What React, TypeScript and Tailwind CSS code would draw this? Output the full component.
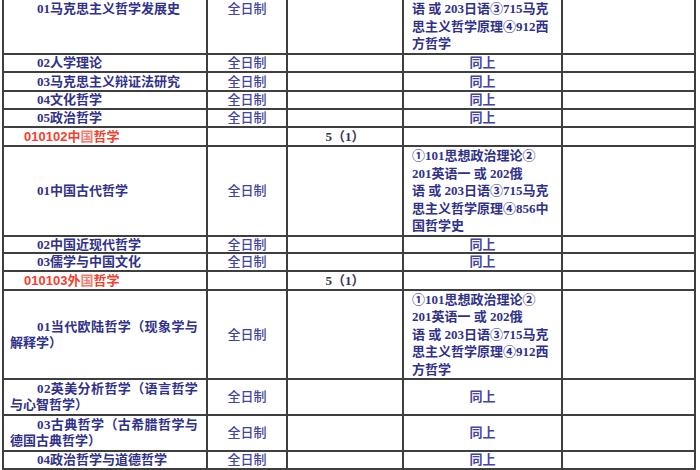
import React from "react";

const serif = { fontFamily: "'Liberation Serif', 'Noto Sans CJK SC', serif" } as const;

type Row = {
  c1: React.ReactNode;
  c1Kind: "single" | "wrap" | "red";
  c2?: string;
  c3?: string;
  c4?: React.ReactNode;
  c4Kind?: "lines" | "same";
};

const lines1 = [
  "①101思想政治理论②",
  "201英语一 或 202俄",
  "语 或 203日语③715马克",
  "思主义哲学原理④912西",
  "方哲学",
];
const lines2 = [
  "①101思想政治理论②",
  "201英语一 或 202俄",
  "语 或 203日语③715马克",
  "思主义哲学原理④856中",
  "国哲学史",
];

const rows: Row[] = [
  { c1: "01马克思主义哲学发展史", c1Kind: "single", c2: "全日制", c4: lines1, c4Kind: "lines" },
  { c1: "02人学理论", c1Kind: "single", c2: "全日制", c4: "同上", c4Kind: "same" },
  { c1: "03马克思主义辩证法研究", c1Kind: "single", c2: "全日制", c4: "同上", c4Kind: "same" },
  { c1: "04文化哲学", c1Kind: "single", c2: "全日制", c4: "同上", c4Kind: "same" },
  { c1: "05政治哲学", c1Kind: "single", c2: "全日制", c4: "同上", c4Kind: "same" },
  { c1: "中国哲学", c1Kind: "red", c3: "5（1）" },
  { c1: "01中国古代哲学", c1Kind: "single", c2: "全日制", c4: lines2, c4Kind: "lines" },
  { c1: "02中国近现代哲学", c1Kind: "single", c2: "全日制", c4: "同上", c4Kind: "same" },
  { c1: "03儒学与中国文化", c1Kind: "single", c2: "全日制", c4: "同上", c4Kind: "same" },
  { c1: "外国哲学", c1Kind: "red", c3: "5（1）" },
  { c1: ["01当代欧陆哲学（现象学与", "解释学）"], c1Kind: "wrap", c2: "全日制", c4: lines1, c4Kind: "lines" },
  { c1: ["02英美分析哲学（语言哲学", "与心智哲学）"], c1Kind: "wrap", c2: "全日制", c4: "同上", c4Kind: "same" },
  { c1: ["03古典哲学（古希腊哲学与", "德国古典哲学）"], c1Kind: "wrap", c2: "全日制", c4: "同上", c4Kind: "same" },
  { c1: "04政治哲学与道德哲学", c1Kind: "single", c2: "全日制", c4: "同上", c4Kind: "same" },
];

const redCodes = ["010102", "010103"];

export default function App() {
  let redIdx = 0;
  return (
    <div className="w-[700px] h-[470px] overflow-hidden bg-white">
      <div
        className="ml-[2px] mt-[-37px] w-[694px] grid grid-cols-[202px_78px_114px_157px_131px] grid-rows-[88px_16px_17px_16px_16px_17px_88px_15px_16px_17px_87px_34px_34px_16px] gap-[2px] p-[2px] bg-[#3f3f3f] text-[13px]"
        style={serif}
      >
        {rows.map((r, i) => {
          let c1: React.ReactNode;
          if (r.c1Kind === "red") {
            const code = redCodes[redIdx++];
            c1 = (
              <div
                className="bg-white flex items-center pl-[20px] text-[13px] leading-[16px] text-[#f2412f] font-semibold"
                style={{ fontFamily: "'Liberation Sans', 'Noto Sans CJK SC', sans-serif" }}
              >
                <span>{code}</span>
                <span>{(r.c1 as string).slice(0, 1)}</span>
                <span className="text-[#f57a72]">{(r.c1 as string).slice(1, 2)}</span>
                <span>{(r.c1 as string).slice(2)}</span>
              </div>
            );
          } else if (r.c1Kind === "wrap") {
            const [a, b] = r.c1 as string[];
            c1 = (
              <div className="bg-white flex items-center pl-[6px] text-[#30318a] font-bold">
                <div className="leading-[16px]">
                  <div className="pl-[27px] tracking-[0.4px] whitespace-nowrap">{a}</div>
                  <div className="whitespace-nowrap">{b}</div>
                </div>
              </div>
            );
          } else {
            c1 = (
              <div className="bg-white flex items-center pl-[33px] leading-[16px] text-[#30318a] font-bold whitespace-nowrap">
                {r.c1}
              </div>
            );
          }
          return (
            <React.Fragment key={i}>
              {c1}
              <div className="bg-white flex items-center justify-center leading-[16px] text-[#4444a2] font-medium">
                {r.c2 ?? ""}
              </div>
              <div className="bg-white flex items-center justify-center leading-[16px] text-[#34344f] font-bold">
                {r.c3 ?? ""}
              </div>
              {r.c4Kind === "lines" ? (
                <div className="bg-white flex flex-col justify-center pl-[8px] leading-[17.6px] text-[#30318a] font-bold whitespace-nowrap">
                  {(r.c4 as string[]).map((l, j) => (
                    <div key={j}>{l}</div>
                  ))}
                </div>
              ) : (
                <div className="bg-white flex items-center justify-center leading-[16px] text-[#4444a2] font-bold">
                  {r.c4 ?? ""}
                </div>
              )}
              <div className="bg-white" />
            </React.Fragment>
          );
        })}
      </div>
    </div>
  );
}
